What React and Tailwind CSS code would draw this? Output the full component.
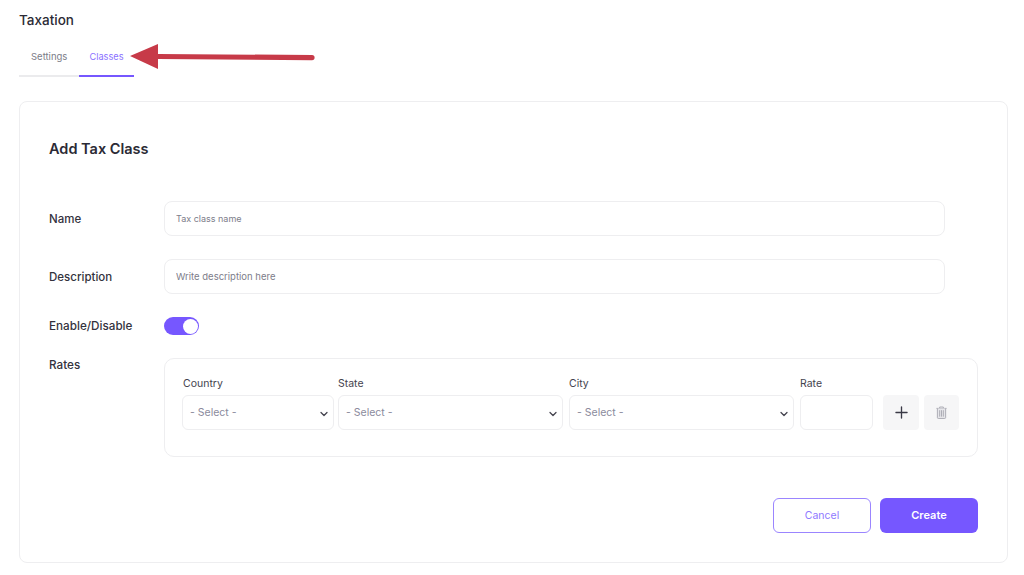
import React from "react";
import { ChevronDown, Plus } from "lucide-react";

function Field({ label, placeholder, className, textClass }) {
  return (
    <div className={`flex items-center ${className}`}>
      <div className="w-[115px] shrink-0 pt-[2px] text-[11.5px] font-medium text-[#33323d]">{label}</div>
      <input
        readOnly
        placeholder={placeholder}
        className={`h-[35px] w-[781px] rounded-[8px] border border-[#eeeef0] bg-white pl-[11px] text-[#333] outline-none placeholder:text-[#7d7d8a] ${textClass}`}
      />
    </div>
  );
}

function SelectCol({ label, className, labelClass }) {
  return (
    <div className={`flex flex-col ${className}`}>
      <div className={`mb-[5px] h-[13px] text-[10.5px] leading-[13px] text-[#44434e] ${labelClass}`}>{label}</div>
      <div className="flex h-[35px] items-center justify-between rounded-[6px] border border-[#eeeef0] bg-white pl-[7px] pr-[3px]">
        <span className="pt-[1px] text-[10.5px] text-[#8a8a9c]">- Select -</span>
        <ChevronDown size={12} strokeWidth={2.5} className="mt-[2px] text-[#44434e]" />
      </div>
    </div>
  );
}

function Trash() {
  return (
    <svg width="11" height="13" viewBox="0 0 12 14" fill="none" stroke="#a7a7b0" strokeWidth="1">
      <path d="M0.5 2.5h11M4 2.5V1h4v1.5" />
      <path d="M1.5 2.5v10a1 1 0 0 0 1 1h7a1 1 0 0 0 1-1v-10" fill="#e6e6ea" />
      <path d="M4 4.5v7M6 4.5v7M8 4.5v7" />
    </svg>
  );
}

export default function App() {
  return (
    <div
      className="relative h-[575px] w-[1024px] overflow-hidden bg-white px-[19px] pt-[12px]"
      style={{ fontFamily: "Inter, 'Liberation Sans', sans-serif" }}
    >
      <h1 className="h-[16px] text-[13.5px] font-medium leading-[16px] text-[#2b2a35]">Taxation</h1>

      <div className="mt-[9px] flex h-[40px]">
        <div className="flex w-[60px] items-center border-b-[2px] border-[#ebebed] pl-[12px] pt-[2px] text-[9.5px] text-[#7c7c88]">
          Settings
        </div>
        <div className="flex w-[55px] items-center justify-center border-b-[2px] border-[#7657ff] pt-[1px] text-[9.2px] text-[#8a70ff]">
          Classes
        </div>
      </div>

      <svg className="absolute left-[128px] top-[42px]" width="190" height="28" viewBox="0 0 190 28">
        <path d="M2 14L30 2V12L184 13a2.6 2.6 0 0 1 0 5.2L30 17V27Z" fill="#c73a48" />
      </svg>

      <div className="mt-[24px] h-[462px] w-[989px] rounded-[8px] border border-[#eeeef0] bg-white pl-[29px] pt-[37px]">
        <h2 className="h-[20px] text-[14.5px] font-semibold leading-[20px] text-[#2b2a35]">Add Tax Class</h2>

        <Field className="mt-[42px]" textClass="text-[9px]" label="Name" placeholder="Tax class name" />
        <Field className="mt-[23px]" textClass="text-[9.5px]" label="Description" placeholder="Write description here" />

        <div className="mt-[23px] flex h-[18px] items-center">
          <div className="w-[115px] pt-[1px] text-[11.7px] font-medium text-[#33323d]">Enable/Disable</div>
          <div className="flex h-[18px] w-[35px] items-center justify-end rounded-full bg-[#7657ff] pr-[1px]">
            <div className="h-[15px] w-[15px] rounded-full bg-white" />
          </div>
        </div>

        <div className="mt-[23px] flex items-start">
          <div className="w-[115px] pt-[1px] text-[11.7px] font-medium leading-[13px] text-[#33323d]">Rates</div>
          <div className="flex h-[99px] w-[814px] rounded-[10px] border border-[#eeeef0] pl-[17px] pt-[18px]">
            <SelectCol className="w-[152px]" labelClass="pl-[1px]" label="Country" />
            <SelectCol className="ml-[4px] w-[225px]" label="State" />
            <SelectCol className="ml-[6px] w-[225px]" label="City" />
            <div className="ml-[6px] flex w-[73px] flex-col">
              <div className="mb-[5px] h-[13px] text-[10.5px] leading-[13px] text-[#44434e]">Rate</div>
              <div className="h-[35px] rounded-[6px] border border-[#eeeef0] bg-white" />
            </div>
            <div className="ml-[10px] mt-[18px] flex h-[35px] w-[36px] items-center justify-center rounded-[4px] bg-[#f6f6f7]">
              <Plus size={19} strokeWidth={1.7} className="text-[#3a3946]" />
            </div>
            <div className="ml-[5px] mt-[18px] flex h-[35px] w-[35px] items-center justify-center rounded-[4px] bg-[#f6f6f7]">
              <Trash />
            </div>
          </div>
        </div>

        <div className="mt-[41px] flex w-[929px] justify-end gap-[9px]">
          <div className="flex h-[35px] w-[98px] items-center justify-center rounded-[6px] border border-[#9b85ff] bg-white text-[10.5px] text-[#8f78ff]">
            Cancel
          </div>
          <div className="flex h-[35px] w-[98px] items-center justify-center rounded-[6px] bg-[#7657ff] text-[11px] font-semibold text-white">
            Create
          </div>
        </div>
      </div>
    </div>
  );
}
